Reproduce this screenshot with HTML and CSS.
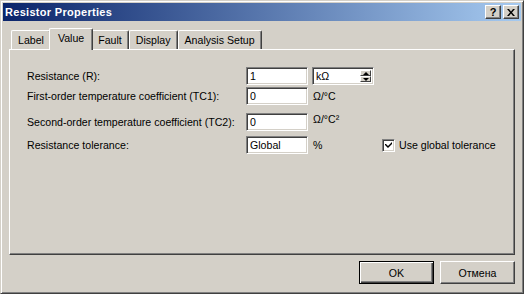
FILE: index.html
```html
<!DOCTYPE html>
<html lang="en">
<head>
    <meta charset="UTF-8">
    <title>Resistor Properties</title>
    <link rel="stylesheet" href="styles.css">
</head>
<body>

    <div class="window">
        <div class="titlebar">
            <span class="title">Resistor Properties</span>
            <div class="caption-buttons">
                <button class="caption-btn">?</button>
                <button class="caption-btn close">
                    <svg width="8" height="7" viewBox="0 0 8 7"><path d="M0 0h2l2 2.5L6 0h2L5 3.5 8 7H6L4 4.5 2 7H0l3-3.5z" fill="#000"/></svg>
                </button>
            </div>
        </div>

        <div class="content">
            <div class="tabs">
                <div class="tab">Label</div>
                <div class="tab active">Value</div>
                <div class="tab">Fault</div>
                <div class="tab">Display</div>
                <div class="tab">Analysis Setup</div>
            </div>

            <div class="panel">
                <div class="form">
                    <label class="lbl">Resistance (R):</label>
                    <div class="edit">1</div>
                    <div class="combo">
                        <span class="combo-text">kΩ</span>
                        <div class="spin">
                            <div class="spin-btn"><span class="arrow-up"></span></div>
                            <div class="spin-btn"><span class="arrow-down"></span></div>
                        </div>
                    </div>
                    <div></div>

                    <label class="lbl">First-order temperature coefficient (TC1):</label>
                    <div class="edit">0</div>
                    <span class="unit">Ω/°C</span>
                    <div></div>

                    <label class="lbl">Second-order temperature coefficient (TC2):</label>
                    <div class="edit">0</div>
                    <span class="unit unit-top">Ω/°C²</span>
                    <div></div>

                    <label class="lbl">Resistance tolerance:</label>
                    <div class="edit">Global</div>
                    <span class="unit">%</span>
                    <label class="check">
                        <span class="check-box">
                            <svg width="7" height="7" viewBox="0 0 7 7"><path d="M0 2h1l2 2 4-4v2L3 6 0 3z" fill="#000"/></svg>
                        </span>
                        Use global tolerance
                    </label>
                </div>
            </div>

            <div class="buttons">
                <button class="btn default">OK</button>
                <button class="btn">Отмена</button>
            </div>
        </div>
    </div>

</body>
</html>
```

FILE: styles.css
```css
body {
    margin: 0;
    padding: 0;
    background: #d4d0c8;
    font-family: "Liberation Sans", Arial, sans-serif;
    font-size: 10.6px;
    color: #000;
}

/* Window frame */
.window {
    width: 524px;
    height: 294px;
    box-sizing: border-box;
    background: #d4d0c8;
    border: 1px solid;
    border-color: #d4d0c8 #404040 #404040 #d4d0c8;
    box-shadow: inset 1px 1px #fff, inset -1px -1px #808080;
    padding: 2px;
}

.titlebar {
    height: 18px;
    background: linear-gradient(to right, #0a246a, #a6caf0);
    display: flex;
    align-items: center;
    justify-content: space-between;
    padding: 0 2px 0 2px;
}

.title {
    color: #fff;
    font-weight: bold;
    font-size: 11px;
    letter-spacing: 0.3px;
}

.caption-buttons {
    display: flex;
    gap: 2px;
}

.caption-btn {
    width: 16px;
    height: 14px;
    padding: 0;
    margin: 0;
    background: #d4d0c8;
    border: 1px solid;
    border-color: #fff #404040 #404040 #fff;
    box-shadow: inset -1px -1px #808080;
    font-family: "Liberation Sans", Arial, sans-serif;
    font-weight: bold;
    font-size: 11px;
    line-height: 11px;
    display: flex;
    align-items: center;
    justify-content: center;
}

/* Dialog body */
.content {
    padding: 7px 6px 0 6px;
}

.tabs {
    display: flex;
    align-items: flex-end;
    height: 21px;
    padding-left: 2px;
}

.tab {
    height: 19px;
    box-sizing: border-box;
    padding: 3px 6px 0 6px;
    border-top: 1px solid #fff;
    border-left: 1px solid #fff;
    border-right: 1px solid #404040;
    box-shadow: inset -1px 0 #808080;
    border-radius: 2px 2px 0 0;
}

.tab.active {
    height: 22px;
    margin: 0 -2px -1px -2px;
    padding: 3px 8px 0 8px;
    background: #d4d0c8;
    position: relative;
    z-index: 1;
}

.panel {
    height: 206px;
    box-sizing: border-box;
    border: 1px solid;
    border-color: #fff #404040 #404040 #fff;
    box-shadow: inset -1px -1px #808080;
    padding: 17px 0 0 17px;
}

.form {
    display: grid;
    grid-template-columns: 219px 62px 74px auto;
    grid-template-rows: 20px 26px 23px 18px;
    align-items: start;
}

.lbl {
    height: 18px;
    line-height: 18px;
    white-space: nowrap;
}

.edit {
    width: 62px;
    height: 18px;
    box-sizing: border-box;
    background: #fff;
    border: 1px solid;
    border-color: #808080 #fff #fff #808080;
    box-shadow: inset 1px 1px #404040, inset -1px -1px #d4d0c8;
    padding: 0 3px;
    line-height: 16px;
}

.combo {
    margin-left: 4px;
    width: 62px;
    height: 18px;
    box-sizing: border-box;
    background: #fff;
    border: 1px solid;
    border-color: #808080 #fff #fff #808080;
    box-shadow: inset 1px 1px #404040, inset -1px -1px #d4d0c8;
    display: flex;
    padding: 2px;
}

.combo-text {
    flex: 1;
    line-height: 13px;
    padding-left: 1px;
}

.spin {
    width: 11px;
    display: flex;
    flex-direction: column;
}

.spin-btn {
    flex: 1;
    background: #d4d0c8;
    box-sizing: border-box;
    border: 1px solid;
    border-color: #fff #404040 #404040 #fff;
    display: flex;
    align-items: center;
    justify-content: center;
}

.arrow-up {
    border-left: 3px solid transparent;
    border-right: 3px solid transparent;
    border-bottom: 3px solid #000;
}

.arrow-down {
    border-left: 3px solid transparent;
    border-right: 3px solid transparent;
    border-top: 3px solid #000;
}

.unit {
    padding-left: 5px;
    line-height: 18px;
}

.unit-top {
    line-height: 12px;
}

.check {
    display: flex;
    align-items: center;
    gap: 4px;
    height: 18px;
}

.check-box {
    width: 13px;
    height: 13px;
    box-sizing: border-box;
    background: #fff;
    border: 1px solid;
    border-color: #808080 #fff #fff #808080;
    box-shadow: inset 1px 1px #404040, inset -1px -1px #d4d0c8;
    display: flex;
    align-items: center;
    justify-content: center;
}

/* Bottom buttons */
.buttons {
    display: flex;
    justify-content: flex-end;
    gap: 6px;
    margin-top: 6px;
}

.btn {
    width: 75px;
    height: 23px;
    margin: 0;
    padding: 0;
    background: #d4d0c8;
    border: 1px solid;
    border-color: #fff #404040 #404040 #fff;
    box-shadow: inset -1px -1px #808080;
    font-family: "Liberation Sans", Arial, sans-serif;
    font-size: 10.6px;
    color: #000;
}

.btn.default {
    border: 1px solid #000;
    box-shadow: inset 1px 1px #fff, inset -1px -1px #404040, inset -2px -2px #808080;
}
```
